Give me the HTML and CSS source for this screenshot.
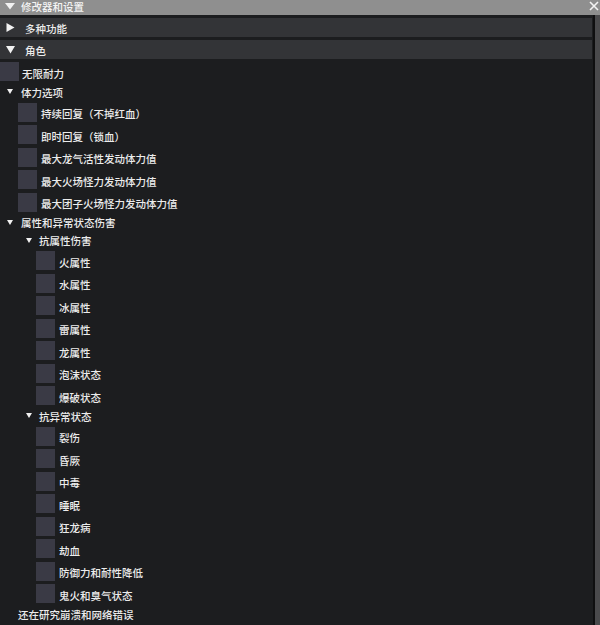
FILE: index.html
```html
<!DOCTYPE html>
<html>
<head>
<meta charset="utf-8">
<link rel="stylesheet" href="styles.css">
</head>
<body>
<div class="window">
  <div class="titlebar">
    <svg class="tri-title" width="10" height="7" viewBox="0 0 10 7"><polygon points="0,0 10,0 5,6.5" fill="#f2f2f2"/></svg>
    <span class="title">修改器和设置</span>
    <svg class="close" width="10" height="10" viewBox="0 0 10 10"><path d="M1 1 L9 9 M9 1 L1 9" stroke="#f4f4f4" stroke-width="1.6"/></svg>
  </div>
  <div class="main">
    <div class="panel">
      <div class="header"><svg class="htri" width="9" height="9" viewBox="0 0 9 9"><polygon points="0.5,0 8.5,4.5 0.5,9" fill="#f2f2f2"/></svg><span>多种功能</span></div>
      <div class="header"><svg class="htri" width="9" height="8" viewBox="0 0 9 8"><polygon points="0,0 9,0 4.5,7.5" fill="#f2f2f2"/></svg><span>角色</span></div>
      <div class="list">
        <div class="row cb l0"><span class="box"></span><span class="lbl">无限耐力</span></div>
        <div class="row node n0"><svg class="ntri" width="6" height="5" viewBox="0 0 6 5"><polygon points="0,0 6,0 3,5" fill="#f0f0f0"/></svg><span class="lbl">体力选项</span></div>
        <div class="row cb l1"><span class="box"></span><span class="lbl">持续回复（不掉红血）</span></div>
        <div class="row cb l1"><span class="box"></span><span class="lbl">即时回复（锁血）</span></div>
        <div class="row cb l1"><span class="box"></span><span class="lbl">最大龙气活性发动体力值</span></div>
        <div class="row cb l1"><span class="box"></span><span class="lbl">最大火场怪力发动体力值</span></div>
        <div class="row cb l1"><span class="box"></span><span class="lbl">最大团子火场怪力发动体力值</span></div>
        <div class="row node n0"><svg class="ntri" width="6" height="5" viewBox="0 0 6 5"><polygon points="0,0 6,0 3,5" fill="#f0f0f0"/></svg><span class="lbl">属性和异常状态伤害</span></div>
        <div class="row node n1"><svg class="ntri" width="6" height="5" viewBox="0 0 6 5"><polygon points="0,0 6,0 3,5" fill="#f0f0f0"/></svg><span class="lbl">抗属性伤害</span></div>
        <div class="row cb l2"><span class="box"></span><span class="lbl">火属性</span></div>
        <div class="row cb l2"><span class="box"></span><span class="lbl">水属性</span></div>
        <div class="row cb l2"><span class="box"></span><span class="lbl">冰属性</span></div>
        <div class="row cb l2"><span class="box"></span><span class="lbl">雷属性</span></div>
        <div class="row cb l2"><span class="box"></span><span class="lbl">龙属性</span></div>
        <div class="row cb l2"><span class="box"></span><span class="lbl">泡沫状态</span></div>
        <div class="row cb l2"><span class="box"></span><span class="lbl">爆破状态</span></div>
        <div class="row node n1"><svg class="ntri" width="6" height="5" viewBox="0 0 6 5"><polygon points="0,0 6,0 3,5" fill="#f0f0f0"/></svg><span class="lbl">抗异常状态</span></div>
        <div class="row cb l2"><span class="box"></span><span class="lbl">裂伤</span></div>
        <div class="row cb l2"><span class="box"></span><span class="lbl">昏厥</span></div>
        <div class="row cb l2"><span class="box"></span><span class="lbl">中毒</span></div>
        <div class="row cb l2"><span class="box"></span><span class="lbl">睡眠</span></div>
        <div class="row cb l2"><span class="box"></span><span class="lbl">狂龙病</span></div>
        <div class="row cb l2"><span class="box"></span><span class="lbl">劫血</span></div>
        <div class="row cb l2"><span class="box"></span><span class="lbl">防御力和耐性降低</span></div>
        <div class="row cb l2"><span class="box"></span><span class="lbl">鬼火和臭气状态</span></div>
        <div class="row text t1"><span class="lbl">还在研究崩溃和网络错误</span></div>
      </div>
    </div>
    <div class="scroll"></div>
  </div>
</div>
</body>
</html>
```
FILE: styles.css
```css
html, body {
  margin: 0;
  padding: 0;
  background: #1c1d1f;
}
body {
  font-family: "Noto Sans CJK SC", "Noto Sans", sans-serif;
  font-size: 10.5px;
  font-weight: 500;
  color: #ececec;
}
.window {
  width: 600px;
  height: 625px;
  display: flex;
  flex-direction: column;
  overflow: hidden;
}
.titlebar {
  height: 15px;
  flex: none;
  background: #8f8f8f;
  display: flex;
  align-items: center;
  position: relative;
}
.tri-title {
  margin-left: 5px;
  margin-top: -3px;
}
.title {
  margin-left: 6px;
  color: #f4f4f4;
  line-height: 14px;
  margin-top: -2px;
}
.close {
  position: absolute;
  right: 1px;
  top: 1px;
}
.main {
  flex: 1;
  display: flex;
  min-height: 0;
}
.panel {
  flex: 1;
  background: #1c1d1f;
  padding-top: 3px;
  display: flex;
  flex-direction: column;
}
.header {
  height: 19px;
  margin-right: 1px;
  margin-bottom: 3px;
  background: #333437;
  display: flex;
  align-items: center;
}
.header + .header { margin-bottom: 0; }
.htri {
  margin-left: 6px;
  margin-right: 10px;
}
.header span {
  color: #ececec;
  padding-top: 2px;
}
.list {
  display: flex;
  flex-direction: column;
  gap: 3.5px;
  padding-top: 3px;
}
.row {
  display: flex;
  align-items: center;
  white-space: nowrap;
}
.cb { height: 19px; }
.cb .lbl { padding-top: 3px; }
.node .lbl, .text .lbl { padding-top: 1px; }
.node, .text { height: 14.5px; }
.box {
  width: 19px;
  height: 19px;
  background: #3a3a45;
  margin-right: 3px;
  flex: none;
}
.l0 { padding-left: 0; }
.l1 { padding-left: 18px; }
.l1 .box { margin-right: 4px; }
.l2 { padding-left: 36px; }
.l2 .box { margin-right: 4px; }
.ntri { margin-right: 8px; }
.n0 { padding-left: 7px; }
.n1 { padding-left: 26px; }
.n1 .ntri { margin-right: 7px; }
.t1 { padding-left: 18px; }
.scroll {
  width: 5px;
  flex: none;
  border-left: 2px solid #0f0f10;
  background: #4a4a4c;
}
```
